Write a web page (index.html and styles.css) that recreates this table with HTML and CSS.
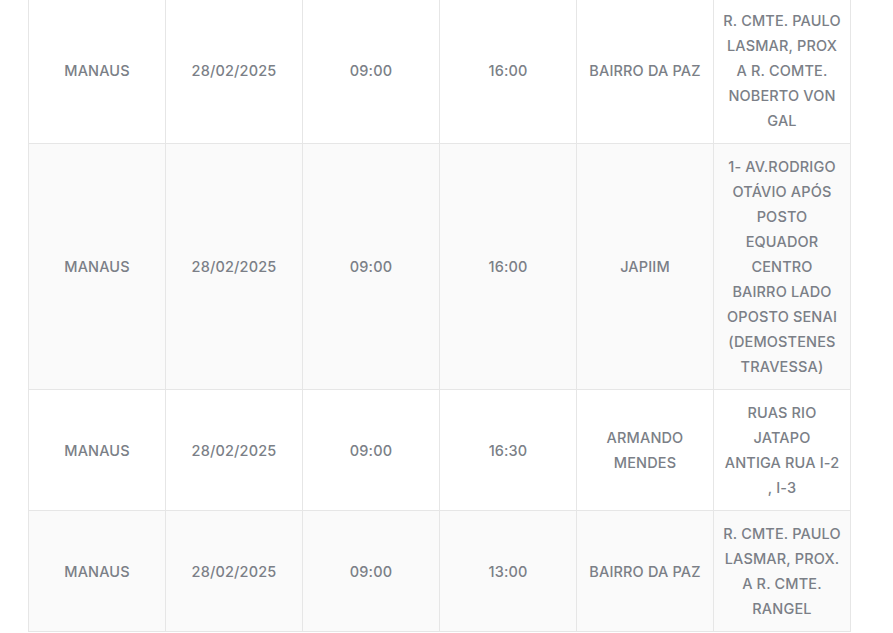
FILE: index.html
```html
<!DOCTYPE html>
<html lang="pt-BR">
<head>
<meta charset="utf-8">
<title>Agenda</title>
<link rel="stylesheet" href="styles.css">
</head>
<body>
<div class="wrap">
<table class="agenda">
<tbody>
<tr class="odd">
<td>MANAUS</td><td>28/02/2025</td><td>09:00</td><td>16:00</td><td>BAIRRO DA PAZ</td><td>R. CMTE. PAULO<br>LASMAR, PROX<br>A R. COMTE.<br>NOBERTO VON<br>GAL</td>
</tr>
<tr class="even">
<td>MANAUS</td><td>28/02/2025</td><td>09:00</td><td>16:00</td><td>JAPIIM</td><td>1- AV.RODRIGO<br>OTÁVIO APÓS<br>POSTO<br>EQUADOR<br>CENTRO<br>BAIRRO LADO<br>OPOSTO SENAI<br>(DEMOSTENES<br>TRAVESSA)</td>
</tr>
<tr class="odd">
<td>MANAUS</td><td>28/02/2025</td><td>09:00</td><td>16:30</td><td>ARMANDO<br>MENDES</td><td>RUAS RIO<br>JATAPO<br>ANTIGA RUA I-2<br>, I-3</td>
</tr>
<tr class="even">
<td>MANAUS</td><td>28/02/2025</td><td>09:00</td><td>13:00</td><td>BAIRRO DA PAZ</td><td>R. CMTE. PAULO<br>LASMAR, PROX.<br>A R. CMTE.<br>RANGEL</td>
</tr>
</tbody>
</table>
</div>
</body>
</html>
```
FILE: styles.css
```css
html, body {
  margin: 0;
  padding: 0;
  background: #ffffff;
}
.wrap {
  padding-left: 28px;
  margin-top: -3px;
}
.agenda {
  border-collapse: collapse;
  table-layout: fixed;
  width: 823px;
  font-family: "Inter", "Open Sans", sans-serif;
  font-size: 14.5px;
  font-weight: 500;
  letter-spacing: 0.15px;
  line-height: 25px;
  color: #7b7f87;
}
.agenda td {
  border: 1px solid #e6e6e6;
  padding: 10px 8px;
  text-align: center;
  vertical-align: middle;
  white-space: nowrap;
}
.agenda .even td {
  background: #fafafa;
}
```
